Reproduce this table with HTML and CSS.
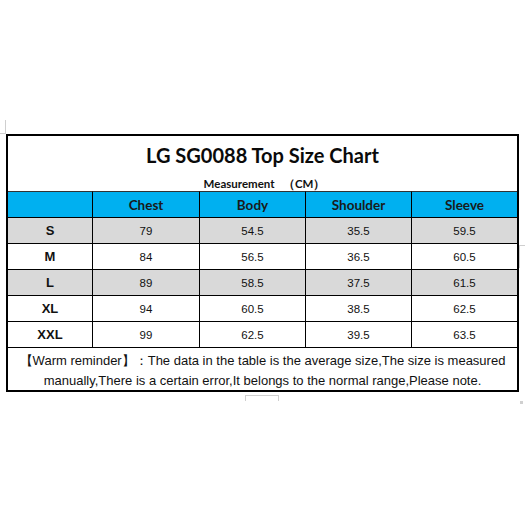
FILE: index.html
```html
<!DOCTYPE html>
<html>
<head>
<meta charset="utf-8">
<link rel="stylesheet" href="styles.css">
</head>
<body>
<div class="page">
  <div class="mark mark-tl"></div>
  <div class="mark mark-r"></div>
  <div class="mark mark-b"></div>
  <div class="mark mark-br"></div>
  <div class="sheet">
    <div class="title">LG SG0088 Top Size Chart</div>
    <div class="measure">Measurement &nbsp;&nbsp;（CM）</div>
    <div class="grid">
      <div class="cell head"></div>
      <div class="cell head">Chest</div>
      <div class="cell head">Body</div>
      <div class="cell head">Shoulder</div>
      <div class="cell head">Sleeve</div>

      <div class="cell size gray">S</div>
      <div class="cell num gray">79</div>
      <div class="cell num gray">54.5</div>
      <div class="cell num gray">35.5</div>
      <div class="cell num gray">59.5</div>

      <div class="cell size">M</div>
      <div class="cell num">84</div>
      <div class="cell num">56.5</div>
      <div class="cell num">36.5</div>
      <div class="cell num">60.5</div>

      <div class="cell size gray">L</div>
      <div class="cell num gray">89</div>
      <div class="cell num gray">58.5</div>
      <div class="cell num gray">37.5</div>
      <div class="cell num gray">61.5</div>

      <div class="cell size">XL</div>
      <div class="cell num">94</div>
      <div class="cell num">60.5</div>
      <div class="cell num">38.5</div>
      <div class="cell num">62.5</div>

      <div class="cell size">XXL</div>
      <div class="cell num">99</div>
      <div class="cell num">62.5</div>
      <div class="cell num">39.5</div>
      <div class="cell num">63.5</div>
    </div>
    <div class="note">【Warm reminder】：The data in the table is the average size,The size is measured manually,There is a certain error,It belongs to the normal range,Please note.</div>
  </div>
</div>
</body>
</html>
```
FILE: styles.css
```css
html, body {
  margin: 0;
  padding: 0;
  background: #fff;
}
.page {
  position: relative;
  width: 525px;
  height: 525px;
  padding-top: 134px;
  box-sizing: border-box;
}
.sheet {
  margin-left: 6px;
  width: 513px;
  border: 2px solid #000;
  box-sizing: border-box;
  background: #fff;
}
.title {
  height: 36px;
  line-height: 38px;
  text-align: center;
  font-family: "Lato", "Open Sans", sans-serif;
  font-weight: 700;
  font-size: 20px;
  color: #0a0a0a;
}
.measure {
  height: 19px;
  line-height: 24px;
  text-align: center;
  font-family: "Lato", "Open Sans", sans-serif;
  font-weight: 700;
  font-size: 11.5px;
  color: #111;
  padding-left: 4px;
}
.grid {
  display: grid;
  grid-template-columns: 85px 107px 106px 106px 1fr;
  grid-auto-rows: 26px;
}
.cell {
  border-top: 1px solid #000;
  border-right: 1px solid #000;
  display: flex;
  align-items: center;
  justify-content: center;
  color: #111;
}
.cell:nth-child(5n) {
  border-right: none;
}
.head {
  background: #00b0f0;
  font-family: "Lato", "Open Sans", sans-serif;
  font-weight: 700;
  font-size: 13.5px;
  color: #1a1a1a;
  border-top-color: #333;
  padding-top: 1px;
}
.gray {
  background: #d9d9d9;
}
.size {
  font-family: "Liberation Sans", Arial, sans-serif;
  font-weight: 700;
  font-size: 13px;
}
.num {
  font-family: "Liberation Sans", Arial, sans-serif;
  font-size: 11.5px;
}
.note {
  border-top: 1px solid #000;
  height: 43px;
  box-sizing: border-box;
  padding: 3px 6px 0;
  text-align: center;
  font-family: "Liberation Sans", Arial, sans-serif;
  font-size: 13px;
  line-height: 20px;
  color: #111;
}
.mark {
  position: absolute;
  border-color: #cfcfcf;
  border-style: solid;
  border-width: 0;
}
.mark-tl {
  left: 0;
  top: 120px;
  width: 5px;
  height: 13px;
  border-right-width: 1px;
  border-bottom-width: 1px;
}
.mark-r {
  left: 519px;
  top: 245px;
  width: 6px;
  height: 22px;
  border-left-width: 1px;
  border-top-width: 1px;
}
.mark-b {
  left: 245px;
  top: 395px;
  width: 32px;
  height: 5px;
  border-left-width: 1px;
  border-right-width: 1px;
  border-top-width: 1px;
}
.mark-br {
  left: 520px;
  top: 401px;
  width: 3px;
  height: 3px;
  background: #d0d0d0;
}
```
